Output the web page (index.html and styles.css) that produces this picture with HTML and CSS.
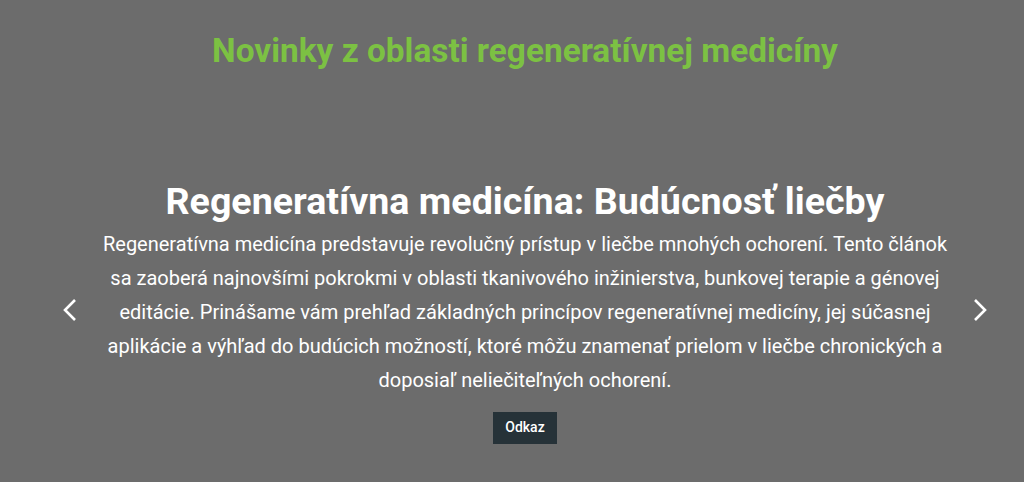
FILE: index.html
```html
<!DOCTYPE html>
<html lang="sk">
<head>
<meta charset="utf-8">
<title>Novinky</title>
<link rel="stylesheet" href="styles.css">
</head>
<body>
<main class="page">
  <h1 class="section-title">Novinky z oblasti regeneratívnej medicíny</h1>
  <section class="carousel">
    <div class="slide">
      <h2 class="slide-title">Regeneratívna medicína: Budúcnosť liečby</h2>
      <p class="slide-text">Regeneratívna medicína predstavuje revolučný prístup v liečbe mnohých ochorení. Tento článok sa zaoberá najnovšími pokrokmi v oblasti tkanivového inžinierstva, bunkovej terapie a génovej editácie. Prinášame vám prehľad základných princípov regeneratívnej medicíny, jej súčasnej aplikácie a výhľad do budúcich možností, ktoré môžu znamenať prielom v liečbe chronických a doposiaľ neliečiteľných ochorení.</p>
      <a class="btn" href="#">Odkaz</a>
    </div>
    <button class="nav prev" aria-label="Predchádzajúci">
      <svg width="16" height="24" viewBox="0 0 16 24"><path d="M13 2 L3 12 L13 22" fill="none" stroke="#fff" stroke-width="2.6"/></svg>
    </button>
    <button class="nav next" aria-label="Ďalší">
      <svg width="16" height="24" viewBox="0 0 16 24"><path d="M3 2 L13 12 L3 22" fill="none" stroke="#fff" stroke-width="2.6"/></svg>
    </button>
  </section>
</main>
</body>
</html>
```

FILE: styles.css
```css
html, body {
  margin: 0;
  padding: 0;
  background: #6c6c6c;
  height: 100%;
  overflow: hidden;
}
.page {
  font-family: Roboto, "Liberation Sans", sans-serif;
  margin-left: 26px;
  width: 998px;
  display: flex;
  flex-direction: column;
  align-items: center;
}
.section-title {
  margin: 29px 0 0;
  font-size: 33.4px;
  font-weight: 700;
  line-height: 44px;
  color: #7cc143;
}
.carousel {
  position: relative;
  width: 100%;
  margin-top: 102px;
}
.nav {
  position: absolute;
  top: 0;
  bottom: 0;
  width: 88px;
  background: none;
  border: 0;
  padding: 0;
  display: flex;
  align-items: center;
  justify-content: center;
  cursor: pointer;
}
.prev { left: 0; }
.next { right: 0; }
.slide {
  display: flex;
  flex-direction: column;
  align-items: center;
  text-align: center;
  color: #fff;
}
.slide-title {
  margin: 0;
  font-size: 37.6px;
  font-weight: 700;
  line-height: 52px;
}
.slide-text {
  margin: 0;
  font-size: 20px;
  line-height: 34px;
  max-width: 862px;
}
.btn {
  margin-top: 15px;
  background: #263238;
  color: #fff;
  font-size: 14px;
  font-weight: 500;
  text-decoration: none;
  padding: 7px 12px;
  line-height: 17px;
  border-bottom: 1px solid #263238;
}
```
